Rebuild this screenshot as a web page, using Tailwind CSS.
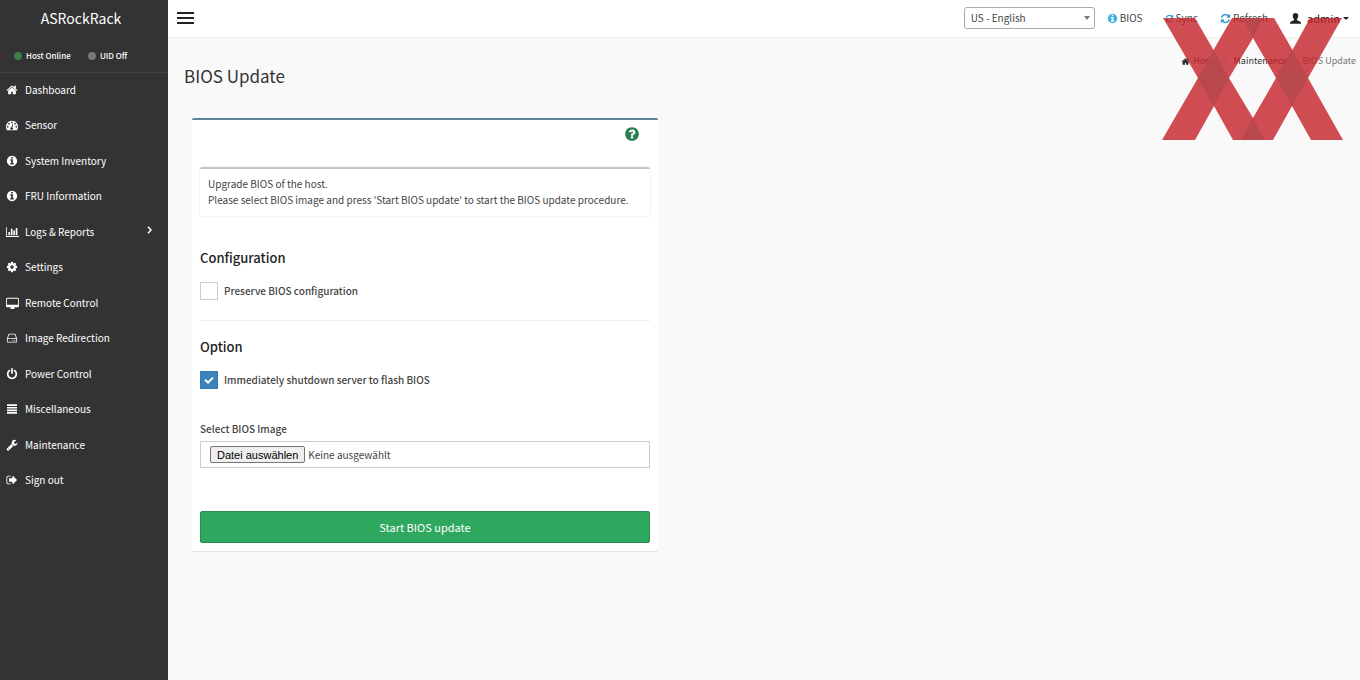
<!DOCTYPE html>
<html lang="en">
<head>
  <meta charset="UTF-8">
  <meta name="viewport" content="width=device-width, initial-scale=1">
  <title>BIOS Update</title>
  <script src="https://cdn.jsdelivr.net/npm/@tailwindcss/browser@4"></script>
</head>

<body class="flex min-h-screen bg-[#f9f9f9] font-['Noto_Sans_CJK_SC','Open_Sans',sans-serif] text-[10px] leading-4 text-[#444]">

<!-- icon sprite -->
<svg class="hidden">
  <symbol id="home" viewBox="0 0 1792 1792"><path d="M1472 992v480q0 26-19 45t-45 19h-384v-384h-256v384h-384q-26 0-45-19t-19-45v-480q0-1 .5-3t.5-3l575-474 575 474q1 2 1 6zm223-69l-62 74q-8 9-21 11h-3q-13 0-21-7l-692-577-692 577q-12 8-24 7-13-2-21-11l-62-74q-8-10-7-23.5t11-21.5l719-599q32-26 76-26t76 26l244 204v-195q0-14 9-23t23-9h192q14 0 23 9t9 23v408l219 182q10 8 11 21.5t-7 23.5z"/></symbol>
  <symbol id="gauge" viewBox="0 0 1792 1792"><path fill-rule="evenodd" d="M896 256a896 896 0 0 0-757 1376q19 32 56 32h1402q37 0 56-32A896 896 0 0 0 896 256zM256 1024a128 128 0 1 0 0 256 128 128 0 0 0 0-256zM448 576a128 128 0 1 0 0 256 128 128 0 0 0 0-256zM896 384a128 128 0 1 0 0 256 128 128 0 0 0 0-256zM1344 576a128 128 0 1 0 0 256 128 128 0 0 0 0-256zM1536 1024a128 128 0 1 0 0 256 128 128 0 0 0 0-256zM1004 797q-26-8-49 6t-30 39l-101 382a192 192 0 1 0 124 32l101-382q6-26-7-49t-38-28z"/></symbol>
  <symbol id="info" viewBox="0 0 1792 1792"><path d="M1152 1376v-160q0-14-9-23t-23-9h-96v-512q0-14-9-23t-23-9h-320q-14 0-23 9t-9 23v160q0 14 9 23t23 9h96v320h-96q-14 0-23 9t-9 23v160q0 14 9 23t23 9h448q14 0 23-9t9-23zm-128-896v-160q0-14-9-23t-23-9h-192q-14 0-23 9t-9 23v160q0 14 9 23t23 9h192q14 0 23-9t9-23zm640 416q0 209-103 385.5t-279.5 279.5-385.5 103-385.5-103-279.5-279.5-103-385.5 103-385.5 279.5-279.5 385.5-103 385.5 103 279.5 279.5 103 385.5z"/></symbol>
  <symbol id="question" viewBox="0 0 1792 1792"><path d="M1024 1376v-192q0-14-9-23t-23-9h-192q-14 0-23 9t-9 23v192q0 14 9 23t23 9h192q14 0 23-9t9-23zm256-672q0-88-55.5-163t-138.5-116-170-41q-243 0-371 213-15 24 8 42l132 100q7 6 19 6 16 0 25-12 53-68 86-92 34-24 86-24 48 0 85.5 26t37.5 59q0 38-20 61t-68 45q-63 28-115.5 86.5t-52.5 125.5v36q0 14 9 23t23 9h192q14 0 23-9t9-23q0-19 21.5-49.5t54.5-49.5q32-18 49-28.5t46-35 44.5-48 28-60.5 12.5-81zm384 192q0 209-103 385.5t-279.5 279.5-385.5 103-385.5-103-279.5-279.5-103-385.5 103-385.5 279.5-279.5 385.5-103 385.5 103 279.5 279.5 103 385.5z"/></symbol>
  <symbol id="chart" viewBox="0 0 2048 1792"><path d="M640 896v512H384V896zm384-512v1024H768V384zm1024 1152v128H0V128h128v1408zM1408 640v768h-256V640zm384-384v1152h-256V256z"/></symbol>
  <symbol id="cog" viewBox="0 0 1792 1792"><path d="M1152 896q0-106-75-181t-181-75-181 75-75 181 75 181 181 75 181-75 75-181zm512-109v222q0 12-8 23t-20 13l-185 28q-19 54-39 91 35 50 107 138 10 12 10 25t-9 23q-27 37-99 108t-94 71q-12 0-26-9l-138-108q-44 23-91 38-16 136-29 186-7 28-36 28h-222q-14 0-24.5-8.5t-11.5-21.5l-28-184q-49-16-90-37l-141 107q-10 9-25 9-14 0-25-11-126-114-165-168-7-10-7-23 0-12 8-23 15-21 51-66.5t54-70.5q-27-50-41-99l-183-27q-13-2-21-12.5t-8-23.5v-222q0-12 8-23t19-13l186-28q14-46 39-92-40-57-107-138-10-12-10-24 0-10 9-23 26-36 98.5-107.5t94.5-71.5q13 0 26 10l138 107q44-23 91-38 16-136 29-186 7-28 36-28h222q14 0 24.5 8.5t11.5 21.5l28 184q49 16 90 37l142-107q9-9 24-9 13 0 25 10 129 119 165 170 7 8 7 22 0 12-8 23-15 21-51 66.5t-54 70.5q26 50 41 98l183 28q13 2 21 12.5t8 23.5z"/></symbol>
  <symbol id="desktop" viewBox="0 0 1920 1792"><path fill-rule="evenodd" d="M160 128h1600q66 0 113 47t47 113v1088q0 66-47 113t-113 47h-544q0 37 32 110t32 82q0 64-64 64H704q-64 0-64-64 0-10 32-82t32-110H160q-66 0-113-47T0 1376V288q0-66 47-113t113-47zm0 128q-32 0-32 32v832q0 32 32 32h1600q32 0 32-32V288q0-32-32-32z"/></symbol>
  <symbol id="hdd" viewBox="0 0 1792 1792"><path fill-rule="evenodd" d="M495 256h802q50 0 92 32t58 80l197 606q20 62 20 114v320q0 66-47 113t-113 47H288q-66 0-113-47t-47-113v-320q0-52 20-114l197-606q16-48 58-80t92-32zm0 128q-22 0-28 24L309 896h1174l-158-488q-6-24-28-24zM288 1024q-32 0-32 32v352q0 32 32 32h1216q32 0 32-32v-352q0-32-32-32zm752 128a80 80 0 1 1 0 160 80 80 0 0 1 0-160zm256 0a80 80 0 1 1 0 160 80 80 0 0 1 0-160z"/></symbol>
  <symbol id="power" viewBox="0 0 1792 1792"><path d="M1664 896q0 156-61 298t-164 245-245 164-298 61-298-61-245-164-164-245-61-298q0-182 80.5-343t226.5-270q43-32 95.5-25t83.500 50q32 42 24.5 94.5t-49.5 84.5q-98 74-151.5 181t-53.5 228q0 104 40.5 198.5t109.5 163.5 163.5 109.5 198.5 40.5 198.5-40.5 163.5-109.5 109.5-163.5 40.5-198.5q0-121-53.5-228t-151.5-181q-42-32-49.5-84.5t24.5-94.5q31-43 84-50t95 25q146 109 226.5 270t80.5 343zm-640-768v640q0 52-38 90t-90 38-90-38-38-90v-640q0-52 38-90t90-38 90 38 38 90z"/></symbol>
  <symbol id="bars" viewBox="0 0 10 10"><path d="M0 .3h10v1.700H0zm0 2.600h10v1.700H0zm0 2.600h10v1.700H0zm0 2.600h10v1.700H0z"/></symbol>
  <symbol id="wrench" viewBox="0 0 1792 1792"><path d="M448 1472q0-26-19-45t-45-19-45 19-19 45 19 45 45 19 45-19 19-45zm644-420l-682 682q-37 37-90 37-52 0-91-37l-106-108q-38-36-38-90 0-53 38-91l681-681q39 98 114.5 173.5t173.5 114.5zm634-435q0 39-23 106-47 134-164.5 217.5t-258.5 83.5q-185 0-316.5-131.5t-131.5-316.5 131.5-316.5 316.5-131.5q58 0 121.5 16.5t107.5 46.5q16 11 16 28t-16 28l-293 169v224l193 107q5-3 79-48.5t135.5-81 70.5-35.5q15 0 23.5 10t8.5 25z"/></symbol>
  <symbol id="signout" viewBox="0 0 1792 1792"><path d="M704 1440q0 4 1 20t.5 26.5-3 23.5-10 19.5-20.5 6.5h-320q-119 0-203.5-84.5t-84.5-203.5v-704q0-119 84.5-203.5t203.5-84.5h320q13 0 22.5 9.5t9.5 22.5q0 4 1 20t.5 26.5-3 23.5-10 19.5-20.5 6.5h-320q-66 0-113 47t-47 113v704q0 66 47 113t113 47h312l11.5 1 11.5 3 8 5.5 7 9 2 13.5zm928-544q0 26-19 45l-544 544q-19 19-45 19t-45-19-19-45v-288h-448q-26 0-45-19t-19-45v-384q0-26 19-45t45-19h448v-288q0-26 19-45t45-19 45 19l544 544q19 19 19 45z"/></symbol>
  <symbol id="refresh" viewBox="0 0 1792 1792"><path d="M1639 1056q0 5-1 7-64 268-268 434.5t-478 166.5q-146 0-282.5-55t-243.5-157l-129 129q-19 19-45 19t-45-19-19-45v-448q0-26 19-45t45-19h448q26 0 45 19t19 45-19 45l-137 137q71 66 161 102t187 36q134 0 250-65t186-179q11-17 53-117 8-23 30-23h192q13 0 22.5 9.5t9.5 22.5zm25-800v448q0 26-19 45t-45 19h-448q-26 0-45-19t-19-45 19-45l138-138q-148-137-349-137-134 0-250 65t-186 179q-11 17-53 117-8 23-30 23h-199q-13 0-22.5-9.5t-9.5-22.5v-7q65-268 270-434.5t480-166.5q146 0 284 55.5t245 156.5l130-129q19-19 45-19t45 19 19 45z"/></symbol>
  <symbol id="user" viewBox="0 0 12 12"><path d="M6 0c2 0 3 1.300 3 3.200 0 1.600-.7 2.600-1.300 3.400-.3.500-.2 1.200.4 1.500l2.700 1.200c.8.400 1.200.9 1.200 1.700v.6H0V11c0-.8.400-1.300 1.200-1.700l2.700-1.200c.6-.3.700-1 .4-1.500C3.700 5.800 3 4.800 3 3.200 3 1.300 4 0 6 0z"/></symbol>
</svg>

<!-- sidebar -->
<aside class="w-[168px] shrink-0 bg-[#333] text-white">
  <div class="flex h-9 items-center justify-center pr-[6px] text-[14px]">ASRockRack</div>
  <div class="flex h-[37px] items-center border-b border-[#444] pt-1 pl-[14px] text-[8px] font-medium">
    <span class="flex w-[74px] items-center gap-1"><i class="size-2 rounded-full bg-[#3f7f45]"></i>Host Online</span>
    <span class="flex items-center gap-1"><i class="size-2 rounded-full bg-[#777]"></i>UID Off</span>
  </div>
  <nav>
    <ul class="grid h-[426px] auto-rows-fr">
      <li class="flex items-center pb-[2px]"><a href="#" class="flex flex-1 items-center pl-[6px]"><svg class="mr-[7px] size-3 fill-current"><use href="#home"/></svg>Dashboard</a></li>
      <li class="flex items-center pb-[2px]"><a href="#" class="flex flex-1 items-center pl-[6px]"><svg class="mr-[7px] size-3 fill-current"><use href="#gauge"/></svg>Sensor</a></li>
      <li class="flex items-center pb-[2px]"><a href="#" class="flex flex-1 items-center pl-[6px]"><svg class="mr-[7px] size-3 fill-current"><use href="#info"/></svg>System Inventory</a></li>
      <li class="flex items-center pb-[2px]"><a href="#" class="flex flex-1 items-center pl-[6px]"><svg class="mr-[7px] size-3 fill-current"><use href="#info"/></svg>FRU Information</a></li>
      <li class="flex items-center pb-[2px]"><a href="#" class="flex flex-1 items-center pl-[6px]"><svg class="mr-[6px] h-3 w-[13px] fill-current"><use href="#chart"/></svg>Logs &amp; Reports<svg class="mr-4 mb-1 ml-auto h-2 w-[5px] fill-none stroke-current stroke-[1.5]" viewBox="0 0 5 8"><path d="M1 .8 4 4 1 7.200"/></svg></a></li>
      <li class="flex items-center pb-[2px]"><a href="#" class="flex flex-1 items-center pl-[6px]"><svg class="mr-[7px] size-3 fill-current"><use href="#cog"/></svg>Settings</a></li>
      <li class="flex items-center pb-[2px]"><a href="#" class="flex flex-1 items-center pl-[6px]"><svg class="mr-[6px] h-3 w-[13px] fill-current"><use href="#desktop"/></svg>Remote Control</a></li>
      <li class="flex items-center pb-[2px]"><a href="#" class="flex flex-1 items-center pl-[6px]"><svg class="mr-[7px] size-3 fill-current"><use href="#hdd"/></svg>Image Redirection</a></li>
      <li class="flex items-center pb-[2px]"><a href="#" class="flex flex-1 items-center pl-[6px]"><svg class="mr-[7px] size-3 fill-current"><use href="#power"/></svg>Power Control</a></li>
      <li class="flex items-center pb-[2px]"><a href="#" class="flex flex-1 items-center pl-[7px]"><svg class="mr-2 size-[10px] fill-current"><use href="#bars"/></svg>Miscellaneous</a></li>
      <li class="flex items-center pb-[2px]"><a href="#" class="flex flex-1 items-center pl-[6px]"><svg class="mr-[7px] size-3 fill-current"><use href="#wrench"/></svg>Maintenance</a></li>
      <li class="flex items-center pb-[2px]"><a href="#" class="flex flex-1 items-center pl-[6px]"><svg class="mr-[7px] size-3 fill-current"><use href="#signout"/></svg>Sign out</a></li>
    </ul>
  </nav>
</aside>

<div class="relative min-w-0 flex-1">
  <!-- top bar -->
  <header class="flex h-[38px] items-center border-b border-[#f0f0f0] bg-white pr-[11px] pb-[1px] pl-[9px]">
    <button type="button" aria-label="Toggle menu" class="flex w-[17px] flex-col gap-[3px]">
      <i class="h-[2px] w-full bg-[#222]"></i><i class="h-[2px] w-full bg-[#222]"></i><i class="h-[2px] w-full bg-[#222]"></i>
    </button>
    <div class="relative mr-3 ml-auto">
      <select aria-label="Language" class="block h-[22px] w-[131px] appearance-none rounded-[3px] border border-[#aaa] bg-white pl-[6px] text-[10px] leading-4 text-[#444]"><option>US - English</option></select>
      <svg class="pointer-events-none absolute top-[9px] right-[5px] h-1 w-[6px] fill-[#777]" viewBox="0 0 6 4"><path d="M0 0h6L3 4z"/></svg>
    </div>
    <a href="#" class="mr-[22px] flex items-center gap-[2px]"><svg class="size-[11px] fill-[#3fb0e5]"><use href="#info"/></svg>BIOS</a>
    <a href="#" class="mr-[22px] flex items-center gap-[2px]"><svg class="size-[9px] fill-[#3c9bd0]"><use href="#refresh"/></svg>Sync</a>
    <a href="#" class="mr-[22px] flex items-center gap-[2px]"><svg class="size-[11px] fill-[#3c9bd0]"><use href="#refresh"/></svg>Refresh</a>
    <button type="button" class="flex items-center text-[#222]"><svg class="mr-[6px] size-[11px] fill-current"><use href="#user"/></svg><span class="text-[11px]">admin</span><svg class="ml-[3px] h-[3px] w-[6px] fill-current" viewBox="0 0 6 3"><path d="M0 0h6L3 3z"/></svg></button>
  </header>

  <!-- heading and breadcrumb -->
  <div class="flex items-start justify-between pr-1 pl-4">
    <h1 class="mt-[22px] text-[17px] leading-8 text-[#333]">BIOS Update</h1>
    <ol class="mt-[15px] flex items-center text-[9px] text-[#777]">
      <li class="flex items-center text-[#333]"><a href="#" class="flex items-center gap-[3px]"><svg class="size-[9px] fill-[#222]"><use href="#home"/></svg>Home</a></li>
      <li class="px-[5px] text-[#ccc]">&gt;</li>
      <li class="text-[#333]"><a href="#">Maintenance</a></li>
      <li class="px-[5px] text-[#ccc]">&gt;</li>
      <li>BIOS Update</li>
    </ol>
  </div>

  <!-- update form -->
  <main class="pt-[26px] pl-6">
    <form class="w-[466px] rounded-[2px] border-t-2 border-[#5c8599] bg-white px-2 pb-2 shadow-[0_1px_1px_rgba(0,0,0,0.1)]">
      <div class="flex h-[47px] justify-end pt-[6px] pr-[10px]">
        <a href="#" aria-label="Help" class="size-4"><svg class="size-4 fill-[#2a8055]"><use href="#question"/></svg></a>
      </div>
      <div class="rounded-[2px] border-t-2 border-[#c6c6c6] px-2 pt-[7px] pb-2 shadow-[0_0_1px_1px_rgba(0,0,0,0.04)]">
        <p>Upgrade BIOS of the host.</p>
        <p>Please select BIOS image and press 'Start BIOS update' to start the BIOS update procedure.</p>
      </div>

      <h2 class="mt-8 text-[13px] leading-5 font-medium text-[#222]">Configuration</h2>
      <div class="mt-[14px] flex items-center gap-[6px] pb-5">
        <input id="preserve" type="checkbox" class="size-[18px] appearance-none border border-[#ccc] bg-white checked:border-[#337ab7] checked:bg-[#3c83bb]">
        <label for="preserve" class="font-medium">Preserve BIOS configuration</label>
      </div>

      <h2 class="border-t border-[#eee] pt-4 text-[13px] leading-5 font-medium text-[#222]">Option</h2>
      <div class="mt-[14px] flex items-center gap-[6px]">
        <span class="relative flex">
          <input id="shutdown" type="checkbox" checked class="peer size-[18px] appearance-none border border-[#ccc] bg-white checked:border-[#337ab7] checked:bg-[#3c83bb]">
          <svg class="pointer-events-none absolute inset-1 hidden size-[10px] fill-none stroke-white stroke-2 peer-checked:block" viewBox="0 0 10 10"><path d="M1 4.800 4 7.600 9 2.600"/></svg>
        </span>
        <label for="shutdown" class="font-medium">Immediately shutdown server to flash BIOS</label>
      </div>

      <label for="image" class="mt-8 block font-medium">Select BIOS Image</label>
      <label for="image" class="mt-1 flex h-[27px] items-center gap-[3px] border border-[#ccc] pl-[9px]">
        <input id="image" type="file" class="sr-only">
        <span class="flex h-[17px] items-center rounded-[2px] border border-[#767676] bg-[#efefef] px-[6px] font-['Liberation_Sans',Arial,sans-serif] text-[11px] text-black">Datei auswählen</span>
        <span>Keine ausgewählt</span>
      </label>

      <button type="submit" class="mt-[43px] h-8 w-full rounded-[2px] border border-[#278a4f] bg-[#2fa85f] text-[11px] text-white">Start BIOS update</button>
    </form>
  </main>

  <!-- crossed-out mark over the top right corner -->
  <svg class="pointer-events-none absolute top-[18px] right-[17px] h-[122px] w-[181px]" viewBox="0 0 181 122">
    <path fill="#c32028" fill-opacity=".8" d="M1 0h32l18.500 32L70 0h42l18.500 32L148 0h32l-34 60 35 62h-32l-19-34-19 34H71L52 88l-19 34H0l36-62zM91 20 67 60l24 40 23-40z"/>
    <path fill="#b6484b" fill-opacity=".95" d="M51.500 32 67 60 51 88 36 60zM130 32l16 28-16 28-16-28zM81 0h20L91 20zM79 122l12-22 11 22z"/>
  </svg>
</div>

</body>
</html>
